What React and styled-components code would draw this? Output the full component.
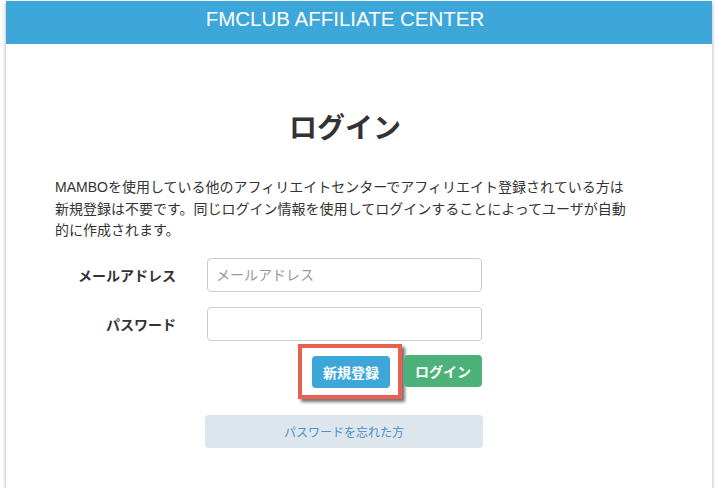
import React from 'react'
import styled, {createGlobalStyle} from 'styled-components'

const Global = createGlobalStyle`
  body {
    margin: 0;
    background: #fff;
    font-family: "Liberation Sans", "Noto Sans CJK JP", sans-serif;
    color: #333;
  }
`

const Panel = styled.div`
  margin: 1px 7px 0 6px;
  height: 487px;
  background: #fff;
  box-shadow: 0 2px 4px rgba(0, 0, 0, 0.35);
`

const Header = styled.header`
  height: 43px;
  background: #3ea7d9;
`

const Container = styled.div`
  width: 580px;
  margin-left: 49px;
`

const Title = styled.h1`
  margin: 0;
  padding-top: 6px;
  font-size: 20.5px;
  line-height: 24px;
  font-weight: normal;
  color: #fff;
  text-align: center;
`

const Heading = styled.h2`
  margin: 0;
  padding-top: 65px;
  font-size: 28px;
  line-height: 40px;
  font-weight: bold;
  text-align: center;
  color: #333;
`

const Lead = styled.p`
  margin: 28px 0 0;
  font-size: 14px;
  line-height: 21.5px;
`

const Form = styled.form`
  margin-top: 16px;
  display: flex;
  flex-direction: column;
  gap: 15px;
`

const Row = styled.div`
  display: flex;
  align-items: center;
`

const Label = styled.label`
  width: 121px;
  padding-right: 31px;
  text-align: right;
  font-size: 14px;
  font-weight: bold;
`

const Input = styled.input`
  box-sizing: border-box;
  width: 275px;
  height: 34px;
  padding: 0 8px;
  border: 1px solid #ccc;
  border-radius: 4px;
  font-family: inherit;
  font-size: 14px;
  color: #333;
  &::placeholder {
    color: #999;
  }
`

const Actions = styled.div`
  display: flex;
  align-items: center;
  justify-content: flex-end;
  width: 427px;
  margin-top: -12px;
`

const Highlight = styled.div`
  display: flex;
  margin-right: 2px;
  padding: 8px 8px 7px 10px;
  border: 4px solid #e8604f;
  box-shadow: 3px 3px 3px rgba(0, 0, 0, 0.55);
`

const Button = styled.button`
  height: 32px;
  width: ${p => p.w}px;
  border: 0;
  border-radius: 4px;
  background: ${p => p.bg};
  color: #fff;
  font-family: inherit;
  font-size: 14px;
  font-weight: bold;
`

const Forgot = styled.button`
  display: block;
  margin: 16px 0 0 150px;
  width: 278px;
  height: 33px;
  border: 0;
  border-radius: 4px;
  background: #dce6ec;
  color: #4f8ec9;
  font-family: inherit;
  font-size: 12px;
`

const App = () => (
  <Panel>
    <Global />
    <Header>
      <Container>
        <Title>FMCLUB AFFILIATE CENTER</Title>
      </Container>
    </Header>
    <Container>
      <Heading>ログイン</Heading>
      <Lead>
        MAMBOを使用している他のアフィリエイトセンターでアフィリエイト登録されている方は新規登録は不要です。同じログイン情報を使用してログインすることによってユーザが自動的に作成されます。
      </Lead>
      <Form>
        <Row>
          <Label>メールアドレス</Label>
          <Input placeholder="メールアドレス" />
        </Row>
        <Row>
          <Label>パスワード</Label>
          <Input type="password" />
        </Row>
        <Actions>
          <Highlight>
            <Button type="button" w={78} bg="#3ea7d9">新規登録</Button>
          </Highlight>
          <Button type="button" w={78} bg="#4db27a">ログイン</Button>
        </Actions>
      </Form>
      <Forgot type="button">パスワードを忘れた方</Forgot>
    </Container>
  </Panel>
)

export default App
